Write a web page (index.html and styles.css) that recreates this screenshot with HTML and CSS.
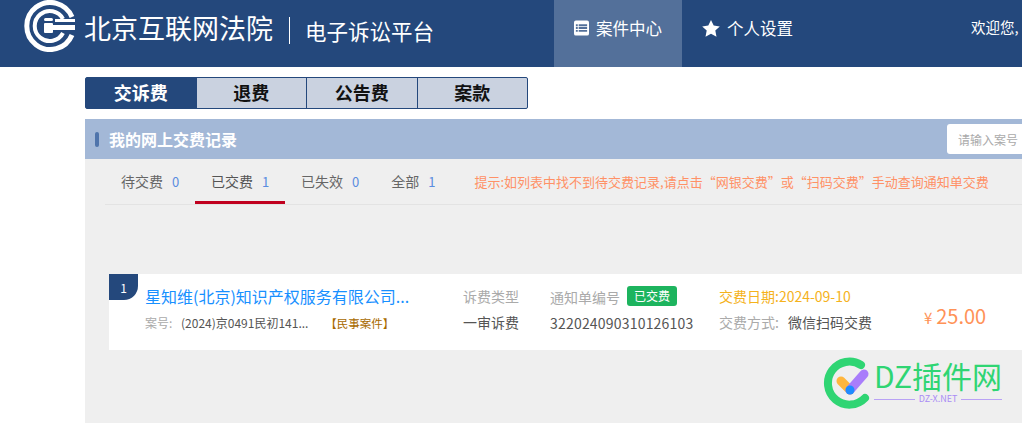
FILE: index.html
```html
<!doctype html>
<html lang="zh-CN">
  <head>
    <meta charset="utf-8">
    <title>北京互联网法院 电子诉讼平台</title>
    <link rel="stylesheet" href="styles.css">
  </head>
  <body>
    <header>
      <svg class="logo" width="52" height="52" viewBox="0 0 52 52">
        <path d="M49 17A23.5 23.5 0 1 0 49 35" fill="none" stroke="#fff" stroke-width="5"/>
        <path d="M40 19A15 15 0 1 0 40 33" fill="none" stroke="#fff" stroke-width="4"/>
        <rect x="30" y="25" width="22" height="5" fill="#fff"/>
        <rect x="32" y="19" width="20" height="3" fill="#fff"/>
        <rect x="21" y="18" width="9" height="3" rx="1.5" fill="#fff"/>
        <rect x="21" y="23" width="9" height="10" rx="1" fill="#fff"/>
      </svg>
      <span class="title">北京互联网法院</span>
      <span class="subtitle">电子诉讼平台</span>
      <nav>
        <a class="active" href="#">
          <svg width="16" height="16" viewBox="0 0 16 16"><path fill="#fff" fill-rule="evenodd" d="M2 0h12a2 2 0 0 1 2 2v12a2 2 0 0 1-2 2H2a2 2 0 0 1-2-2V2a2 2 0 0 1 2-2zM2 4v2h2V4zM5 4v2h9V4zM2 7v2h2V7zM5 7v2h9V7zM2 10v2h2v-2zM5 10v2h9v-2z"/></svg>
          案件中心
        </a>
        <a href="#">
          <svg width="18" height="17" viewBox="0 0 18 17"><path fill="#fff" d="M9 0l2.7 5.6 6.1.8-4.5 4.2 1.2 6.1L9 13.7l-5.5 3 1.2-6.1L.2 6.4l6.1-.8z"/></svg>
          个人设置
        </a>
      </nav>
      <span class="welcome">欢迎您,</span>
    </header>

    <main>
      <div class="fee-tabs">
        <a class="active" href="#">交诉费</a>
        <a href="#">退费</a>
        <a href="#">公告费</a>
        <a href="#">案款</a>
      </div>

      <section class="panel">
        <div class="panel-head">
          <i class="mark"></i>
          <h2>我的网上交费记录</h2>
          <input class="search" type="text" placeholder="请输入案号">
        </div>

        <div class="status-bar">
          <a href="#">待交费<b>0</b></a>
          <a class="active" href="#">已交费<b>1</b></a>
          <a href="#">已失效<b>0</b></a>
          <a href="#">全部<b>1</b></a>
          <p class="tip">提示:如列表中找不到待交费记录,请点击“网银交费”或“扫码交费”手动查询通知单交费</p>
        </div>

        <div class="record">
          <span class="no">1</span>
          <div class="col col-main">
            <a class="company" href="#">星知维(北京)知识产权服务有限公司...</a>
            <div class="case">
              <span class="label">案号:</span>
              <span class="case-no">(2024)京0491民初141...</span>
              <span class="case-type">【民事案件】</span>
            </div>
          </div>
          <div class="col col-type">
            <span class="label">诉费类型</span>
            <span class="val">一审诉费</span>
          </div>
          <div class="col col-notice">
            <span class="label">通知单编号<em class="paid">已交费</em></span>
            <span class="val">322024090310126103</span>
          </div>
          <div class="col col-pay">
            <span class="date">交费日期:2024-09-10</span>
            <span class="val"><span class="label">交费方式:</span>微信扫码交费</span>
          </div>
          <div class="amount">¥<span>25.00</span></div>
        </div>
      </section>
    </main>

    <div class="watermark">
      <svg width="52" height="52" viewBox="0 0 52 52">
        <path d="M39 8A21.5 21.5 0 1 0 43 41" fill="none" stroke="#2fd573" stroke-width="8" stroke-linecap="round"/>
        <path d="M19 24l9 9" stroke="#ffb63d" stroke-width="9" stroke-linecap="round"/>
        <path d="M28 33l14-16" stroke="#a97dfb" stroke-width="9" stroke-linecap="round"/>
        <circle cx="28" cy="33" r="4.5" fill="#1e8cff"/>
      </svg>
      <div>
        <div class="wm-name">DZ插件网</div>
        <div class="wm-site"><i></i>DZ-X.NET<i></i></div>
      </div>
    </div>
  </body>
</html>
```

FILE: styles.css
```css
html, body {
  margin: 0;
  height: 423px;
  overflow: hidden;
}

body {
  position: relative;
  width: 1022px;
  background-color: #fff;
  color: #555;
  font-family: "Noto Sans CJK SC", "Liberation Sans", sans-serif;
}

a {
  text-decoration: none;
}

header {
  display: flex;
  align-items: flex-start;
  height: 67px;
  padding-left: 23px;
  background-color: #24487c;
  color: #fff;
  white-space: nowrap;
}

.logo {
  flex: none;
  margin-right: 9px;
}

.title {
  margin-top: 8px;
  padding-right: 16px;
  font-size: 27px;
  line-height: 40px;
}

.subtitle {
  margin-top: 17px;
  padding-left: 15px;
  border-left: 1px solid #fff;
  font-size: 21.5px;
  line-height: 27px;
}

nav {
  display: flex;
  margin-left: 120px;
}

nav a {
  display: flex;
  align-items: flex-start;
  gap: 7px;
  height: 67px;
  padding: 0 20px;
  color: #fff;
  font-size: 16.5px;
  line-height: 57px;
}

nav a svg {
  margin-top: 20px;
}

nav a.active {
  width: 128px;
  box-sizing: border-box;
  justify-content: center;
  background-color: #53709a;
}

.welcome {
  margin-left: 158px;
  font-size: 14.5px;
  line-height: 54px;
}

main {
  padding: 10px 0 0 85px;
}

.fee-tabs {
  display: flex;
  width: 443px;
  height: 32px;
  box-sizing: border-box;
  border: 1px solid #24487c;
  border-radius: 2px;
  background-color: #cad2e0;
}

.fee-tabs a {
  flex: 1;
  border-left: 1px solid #24487c;
  color: #111;
  font-size: 18px;
  font-weight: bold;
  line-height: 29px;
  text-align: center;
}

.fee-tabs a:first-child {
  border-left: 0;
}

.fee-tabs a.active {
  background-color: #24487c;
  color: #fff;
}

.panel {
  width: 1000px;
  height: 304px;
  margin-top: 10px;
  background-color: #efefef;
}

.panel-head {
  display: flex;
  align-items: center;
  height: 40px;
  padding-left: 10px;
  background-color: #a3b8d7;
}

.mark {
  width: 4px;
  height: 15px;
  border-radius: 2px;
  background-color: #4f74ab;
}

.panel-head h2 {
  margin: 0 0 0 10px;
  color: #fff;
  font-size: 16px;
  font-weight: bold;
}

.search {
  width: 120px;
  height: 30px;
  box-sizing: border-box;
  margin-left: 710px;
  padding: 0 11px;
  border: 0;
  border-radius: 3px;
  font-family: inherit;
  font-size: 12px;
}

.search::placeholder {
  color: #aaa;
}

.status-bar {
  display: flex;
  align-items: center;
  height: 45px;
  margin-left: 20px;
  border-bottom: 1px solid #e3e3e3;
  white-space: nowrap;
  font-size: 14px;
}

.status-bar a {
  height: 45px;
  box-sizing: border-box;
  padding: 0 16px;
  color: #666;
  line-height: 45px;
}

.status-bar a:first-child {
  width: 90px;
}

.status-bar a.active {
  width: 90px;
  border-bottom: 3px solid #c0001f;
  color: #555;
}

.status-bar a b {
  margin-left: 9px;
  color: #5a8de0;
  font-size: 13px;
  font-weight: normal;
}

.tip {
  margin: 0 0 0 23px;
  color: #ff9166;
  font-size: 13px;
}

.record {
  position: relative;
  display: flex;
  align-items: flex-start;
  height: 76px;
  box-sizing: border-box;
  margin: 69px 0 0 24px;
  padding-top: 12px;
  background-color: #fff;
  white-space: nowrap;
  font-size: 14px;
}

.no {
  position: absolute;
  top: 0;
  left: 0;
  width: 29px;
  height: 26px;
  border-bottom-right-radius: 14px;
  background-color: #24487c;
  color: #fff;
  font-size: 12px;
  line-height: 28px;
  text-align: center;
}

.col {
  display: flex;
  flex-direction: column;
  gap: 6px;
}

.col .label,
.col .val {
  line-height: 20px;
}

.label {
  color: #aaa;
}

.paid {
  display: inline-block;
  margin-left: 7px;
  padding: 0 7px;
  border-radius: 3px;
  background-color: #1db45e;
  color: #fff;
  font-size: 12px;
  font-style: normal;
  line-height: 20px;
  vertical-align: 2px;
}

.col-main {
  width: 318px;
  margin-left: 36px;
  gap: 7px;
}

.company {
  color: #1890ff;
  font-size: 16px;
  line-height: 20px;
}

.case {
  font-size: 12px;
  line-height: 18px;
}

.case-no {
  margin-left: 6px;
}

.case-type {
  margin-left: 14px;
  color: #a86a00;
  font-size: 11.5px;
}

.col-type {
  width: 87px;
}

.col-notice {
  width: 169px;
}

.col-notice .val {
  letter-spacing: .2px;
}

.date {
  color: #f5b21c;
  line-height: 20px;
}

.col-pay .val .label {
  margin-right: 9px;
}

.amount {
  margin: 15px 0 0 52px;
  color: #ff9257;
  font-size: 15px;
}

.amount span {
  margin-left: 4px;
  font-size: 20px;
}

.watermark {
  position: absolute;
  top: 357px;
  left: 822px;
  display: flex;
  gap: 0;
}

.wm-name {
  color: #2fd573;
  font-size: 30px;
  line-height: 36px;
}

.wm-site {
  display: flex;
  align-items: center;
  gap: 4px;
  color: #a98cf5;
  font-size: 9px;
  line-height: 12px;
}

.wm-site i {
  flex: 1;
  height: 1px;
  background-color: #b9a2f5;
}
```
